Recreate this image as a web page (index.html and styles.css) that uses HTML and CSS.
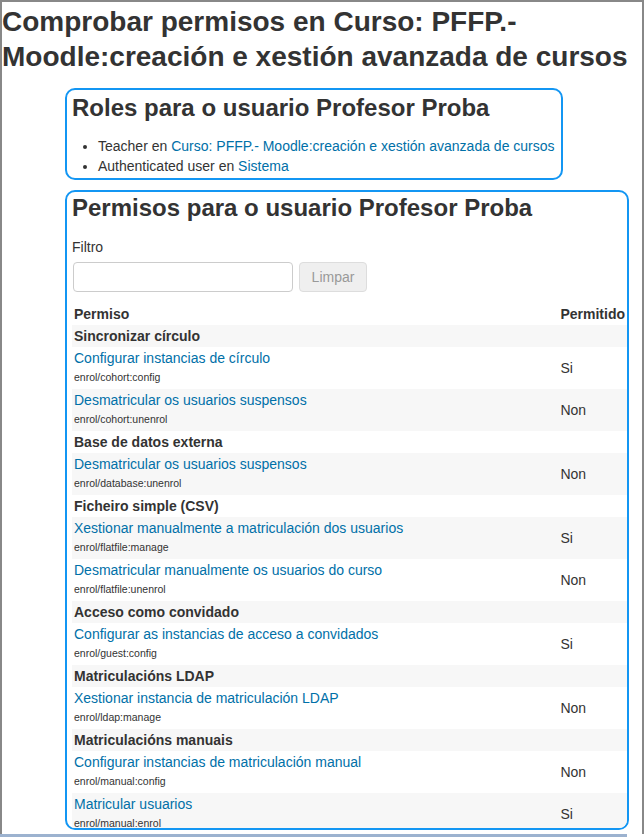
FILE: index.html
```html
<!DOCTYPE html>
<html>

<head>
  <meta charset="utf-8">
  <title>Comprobar permisos</title>

  <link rel="stylesheet" href="styles.css">

</head>

<body>

  <div class="frame">

    <h1 class="page-title">Comprobar permisos en Curso: PFFP.- Moodle:creación e xestión avanzada de cursos</h1>

    <div class="box roles-box">
      <h2 class="box-title">Roles para o usuario Profesor Proba</h2>
      <ul class="roles-list">
        <li>Teacher en <a href="#">Curso: PFFP.- Moodle:creación e xestión avanzada de cursos</a></li>
        <li>Authenticated user en <a href="#">Sistema</a></li>
      </ul>
    </div>

    <div class="box perms-box">
      <h2 class="box-title">Permisos para o usuario Profesor Proba</h2>

      <form class="filter-form" action="#">
        <label class="filter-label" for="filter">Filtro</label>
        <div class="filter-row">
          <input class="filter-input" id="filter" type="text" name="filter"><button class="clear-button" type="button" disabled>Limpar</button>
        </div>
      </form>

      <table class="perms-table">
        <thead>
          <tr><th>Permiso</th><th class="allowed-col">Permitido</th></tr>
        </thead>
        <tbody>
          <tr><td class="group" colspan="2">Sincronizar círculo</td></tr>
          <tr><td class="perm"><a href="#">Configurar instancias de círculo</a><small>enrol/cohort:config</small></td><td class="allowed-col">Si</td></tr>
          <tr><td class="perm"><a href="#">Desmatricular os usuarios suspensos</a><small>enrol/cohort:unenrol</small></td><td class="allowed-col">Non</td></tr>
          <tr><td class="group" colspan="2">Base de datos externa</td></tr>
          <tr><td class="perm"><a href="#">Desmatricular os usuarios suspensos</a><small>enrol/database:unenrol</small></td><td class="allowed-col">Non</td></tr>
          <tr><td class="group" colspan="2">Ficheiro simple (CSV)</td></tr>
          <tr><td class="perm"><a href="#">Xestionar manualmente a matriculación dos usuarios</a><small>enrol/flatfile:manage</small></td><td class="allowed-col">Si</td></tr>
          <tr><td class="perm"><a href="#">Desmatricular manualmente os usuarios do curso</a><small>enrol/flatfile:unenrol</small></td><td class="allowed-col">Non</td></tr>
          <tr><td class="group" colspan="2">Acceso como convidado</td></tr>
          <tr><td class="perm"><a href="#">Configurar as instancias de acceso a convidados</a><small>enrol/guest:config</small></td><td class="allowed-col">Si</td></tr>
          <tr><td class="group" colspan="2">Matriculacións LDAP</td></tr>
          <tr><td class="perm"><a href="#">Xestionar instancia de matriculación LDAP</a><small>enrol/ldap:manage</small></td><td class="allowed-col">Non</td></tr>
          <tr><td class="group" colspan="2">Matriculacións manuais</td></tr>
          <tr><td class="perm"><a href="#">Configurar instancias de matriculación manual</a><small>enrol/manual:config</small></td><td class="allowed-col">Non</td></tr>
          <tr><td class="perm"><a href="#">Matricular usuarios</a><small>enrol/manual:enrol</small></td><td class="allowed-col">Si</td></tr>
        </tbody>
      </table>
    </div>

  </div>
  <div class="bottom-bar"></div>

</body>

</html>
```

FILE: styles.css
```css
body {
  margin: 0;
  font-family: "Liberation Sans", Arial, sans-serif;
  font-size: 14px;
  color: #333;
  background: white;
}

a {
  color: #0070a8;
  text-decoration: none;
}

/* Grey window frame round the page, clipped at the bottom. */
.frame {
  box-sizing: border-box;
  width: 644px;
  height: 834px;
  border-top: 2px solid #888;
  border-left: 2px solid #888;
  border-right: 2px solid #888;
  overflow: hidden;
}

.bottom-bar {
  height: 3px;
  width: 627px;
  background: #9cb2cf;
}

.page-title {
  margin: 0 0 14px 0;
  padding-top: 2px;
  font-size: 28px;
  line-height: 35px;
  font-weight: bold;
  color: #333;
}

/* Blue rounded boxes */
.box {
  box-sizing: border-box;
  margin-left: 63px;
  border: 2px solid #1396f3;
  border-radius: 10px;
  padding: 0 0 0 5px;
}

.roles-box {
  width: 498px;
  padding-bottom: 2px;
}

.perms-box {
  width: 564px;
  height: 640px;
  margin-top: 10px;
  overflow: hidden;
}

.box-title {
  margin: 4px 0 14px 0;
  font-size: 24px;
  line-height: 28px;
  font-weight: bold;
  color: #333;
}

.perms-box .box-title {
  margin-top: 2px;
  margin-bottom: 15px;
}

.roles-list {
  margin: 0;
  padding-left: 26px;
  line-height: 20px;
}

/* Filter form */
.filter-label {
  display: block;
  line-height: 20px;
  margin-bottom: 5px;
}

.filter-row {
  display: flex;
  gap: 6px;
  margin-bottom: 10px;
}

.filter-input {
  box-sizing: border-box;
  width: 220px;
  height: 30px;
  margin: 0 0 0 1px;
  border: 1px solid #ccc;
  border-radius: 4px;
}

.clear-button {
  box-sizing: border-box;
  width: 68px;
  height: 30px;
  border: 1px solid #ddd;
  border-radius: 4px;
  background: #efefef;
  color: #999;
  font-family: "Liberation Sans", Arial, sans-serif;
  font-size: 14px;
}

/* Permissions table */
.perms-table {
  width: 100%;
  border-collapse: collapse;
}

.perms-table th,
.perms-table td {
  padding: 3px 2px;
  text-align: left;
  line-height: 16px;
  vertical-align: middle;
}

.perms-table thead th {
  padding-top: 4px;
}

.perms-table tbody tr:nth-child(odd) {
  background: #f7f7f7;
}

.perms-table .allowed-col {
  width: 1%;
  white-space: nowrap;
}

.perms-table td.group {
  font-weight: bold;
}

.perms-table td.perm {
  padding-top: 2px;
  padding-bottom: 2px;
}

.perms-table td a {
  display: block;
  line-height: 19px;
}

.perms-table td small {
  display: block;
  font-size: 10.5px;
  line-height: 19px;
  color: #333;
}
```
